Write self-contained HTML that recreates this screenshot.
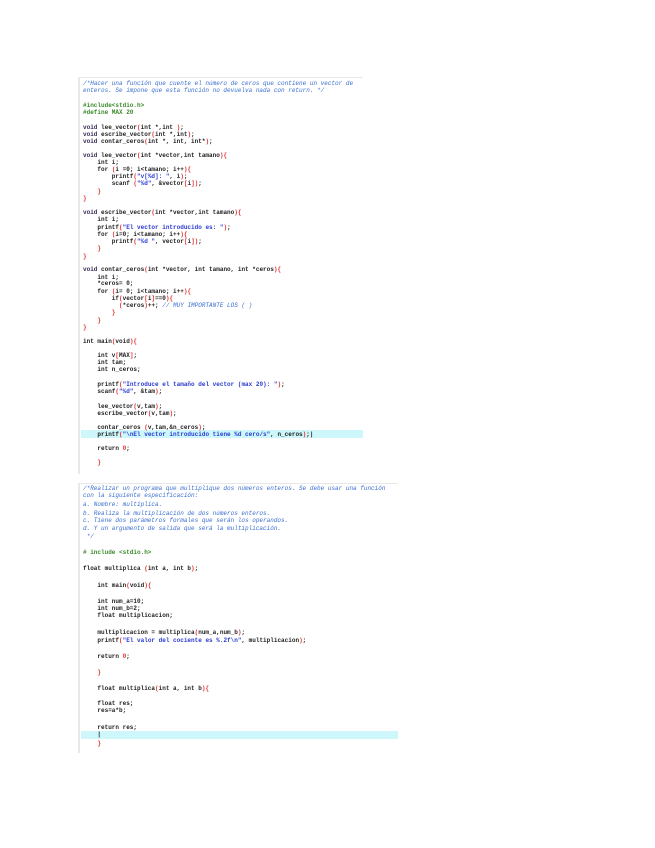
<!DOCTYPE html>
<html><head><meta charset="utf-8"><style>
html,body{margin:0;padding:0;background:#fff;width:655px;height:848px;overflow:hidden}
.l{position:absolute;left:83px;font-family:"Liberation Mono",monospace;font-size:6px;line-height:7px;white-space:pre;color:#222;font-weight:bold}
.c{color:#3a6fd0;font-weight:normal;font-style:italic}
.k{color:#3a2a5a}
.s{color:#2a3ad0}
.r{color:#e03030}
.g{color:#3a8a2a}
.hl{position:absolute;background:#cdf7fb}
.bar{position:absolute;background:#e8e8e8}
</style></head><body>
<div class="bar" style="left:78px;top:77px;width:2px;height:397px"></div>
<div class="bar" style="left:78px;top:77px;width:285px;height:1px"></div>
<div class="bar" style="left:78px;top:483px;width:2px;height:270px"></div>
<div class="bar" style="left:78px;top:483px;width:320px;height:1px"></div>
<div class="hl" style="left:81px;top:430px;width:282px;height:8px"></div>
<div class="hl" style="left:81px;top:731px;width:317px;height:8px"></div>

<div class="l c" style="top:80px">/*Hacer una función que cuente el número de ceros que contiene un vector de</div>
<div class="l c" style="top:87px">enteros. Se impone que esta función no devuelva nada con return. */</div>
<div class="l g" style="top:102px">#include&lt;stdio.h&gt;</div>
<div class="l g" style="top:109px">#define MAX 20</div>
<div class="l" style="top:124px"><span class="k">void</span> lee_vector<span class="r">(</span>int *,int <span class="r">)</span>;</div>
<div class="l" style="top:131px"><span class="k">void</span> escribe_vector<span class="r">(</span>int *,int<span class="r">)</span>;</div>
<div class="l" style="top:138px"><span class="k">void</span> contar_ceros<span class="r">(</span>int *, int, int*<span class="r">)</span>;</div>
<div class="l" style="top:152px"><span class="k">void</span> lee_vector<span class="r">(</span>int *vector,int tamano<span class="r">){</span></div>
<div class="l" style="top:159px">    int i;</div>
<div class="l" style="top:166px">    for <span class="r">(</span>i =0; i&lt;tamano; i++<span class="r">){</span></div>
<div class="l" style="top:173px">        printf<span class="r">(</span><span class="s">"v[%d]: "</span>, i<span class="r">)</span>;</div>
<div class="l" style="top:180px">        scanf <span class="r">(</span><span class="s">"%d"</span>, &amp;vector<span class="r">[</span>i<span class="r">])</span>;</div>
<div class="l r" style="top:188px">    }</div>
<div class="l r" style="top:195px">}</div>
<div class="l" style="top:209px"><span class="k">void</span> escribe_vector<span class="r">(</span>int *vector,int tamano<span class="r">){</span></div>
<div class="l" style="top:216px">    int i;</div>
<div class="l" style="top:224px">    printf<span class="r">(</span><span class="s">"El vector introducido es: "</span><span class="r">)</span>;</div>
<div class="l" style="top:231px">    for <span class="r">(</span>i=0; i&lt;tamano; i++<span class="r">){</span></div>
<div class="l" style="top:238px">        printf<span class="r">(</span><span class="s">"%d "</span>, vector<span class="r">[</span>i<span class="r">])</span>;</div>
<div class="l r" style="top:245px">    }</div>
<div class="l r" style="top:253px">}</div>
<div class="l" style="top:266px"><span class="k">void</span> contar_ceros<span class="r">(</span>int *vector, int tamano, int *ceros<span class="r">){</span></div>
<div class="l" style="top:274px">    int i;</div>
<div class="l" style="top:280px">    *ceros= 0;</div>
<div class="l" style="top:288px">    for <span class="r">(</span>i= 0; i&lt;tamano; i++<span class="r">){</span></div>
<div class="l" style="top:295px">        if<span class="r">(</span>vector<span class="r">[</span>i<span class="r">]</span>==0<span class="r">){</span></div>
<div class="l" style="top:302px">          <span class="r">(</span>*ceros<span class="r">)</span>++; <span class="c">// MUY IMPORTANTE LOS ( )</span></div>
<div class="l r" style="top:309px">        }</div>
<div class="l r" style="top:317px">    }</div>
<div class="l r" style="top:324px">}</div>
<div class="l" style="top:338px">int main<span class="r">(</span>void<span class="r">){</span></div>
<div class="l" style="top:352px">    int v<span class="r">[</span>MAX<span class="r">]</span>;</div>
<div class="l" style="top:359px">    int tam;</div>
<div class="l" style="top:366px">    int n_ceros;</div>
<div class="l" style="top:381px">    printf<span class="r">(</span><span class="s">"Introduce el tamaño del vector (max 20): "</span><span class="r">)</span>;</div>
<div class="l" style="top:388px">    scanf<span class="r">(</span><span class="s">"%d"</span>, &amp;tam<span class="r">)</span>;</div>
<div class="l" style="top:403px">    lee_vector<span class="r">(</span>v,tam<span class="r">)</span>;</div>
<div class="l" style="top:410px">    escribe_vector<span class="r">(</span>v,tam<span class="r">)</span>;</div>
<div class="l" style="top:424px">    contar_ceros <span class="r">(</span>v,tam,&amp;n_ceros<span class="r">)</span>;</div>
<div class="l" style="top:431px">    printf<span class="r">(</span><span class="s">"\nEl vector introducido tiene %d cero/s"</span>, n_ceros<span class="r">)</span>;|</div>
<div class="l" style="top:445px">    return <span class="r">0</span>;</div>
<div class="l r" style="top:459px">    }</div>

<div class="l c" style="top:485px">/*Realizar un programa que multiplique dos números enteros. Se debe usar una función</div>
<div class="l c" style="top:492px">con la siguiente especificación:</div>
<div class="l c" style="top:501px">a. Nombre: multiplica.</div>
<div class="l c" style="top:510px">b. Realiza la multiplicación de dos números enteros.</div>
<div class="l c" style="top:517px">c. Tiene dos parámetros formales que serán los operandos.</div>
<div class="l c" style="top:525px">d. Y un argumento de salida que será la multiplicación.</div>
<div class="l c" style="top:533px"> */</div>
<div class="l g" style="top:549px"># include &lt;stdio.h&gt;</div>
<div class="l" style="top:565px">float multiplica <span class="r">(</span>int a, int b<span class="r">)</span>;</div>
<div class="l" style="top:582px">    int main<span class="r">(</span>void<span class="r">){</span></div>
<div class="l" style="top:598px">    int num_a=10;</div>
<div class="l" style="top:605px">    int num_b=2;</div>
<div class="l" style="top:612px">    float multiplicacion;</div>
<div class="l" style="top:629px">    multiplicacion = multiplica<span class="r">(</span>num_a,num_b<span class="r">)</span>;</div>
<div class="l" style="top:637px">    printf<span class="r">(</span><span class="s">"El valor del cociente es %.2f\n"</span>, multiplicacion<span class="r">)</span>;</div>
<div class="l" style="top:653px">    return <span class="r">0</span>;</div>
<div class="l r" style="top:669px">    }</div>
<div class="l" style="top:685px">    float multiplica<span class="r">(</span>int a, int b<span class="r">){</span></div>
<div class="l" style="top:700px">    float res;</div>
<div class="l" style="top:707px">    res=a*b;</div>
<div class="l" style="top:724px">    return res;</div>
<div class="l" style="top:731px">    |</div>
<div class="l r" style="top:740px">    }</div>
</body></html>
